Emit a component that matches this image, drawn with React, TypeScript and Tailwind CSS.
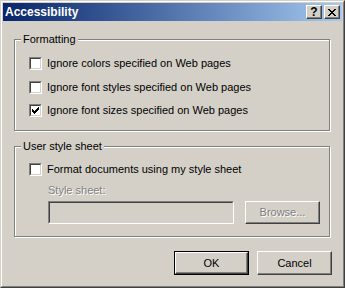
import React from 'react';

const face = 'bg-[#d4d0c8]';

const CheckMark: React.FC = () => (
  <svg width="7" height="7" viewBox="0 0 7 7" shapeRendering="crispEdges">
    {[[0, 2], [1, 3], [2, 4], [3, 3], [4, 2], [5, 1], [6, 0]].map(([x, y]) => (
      <rect key={x} x={x} y={y} width="1" height="3" fill="#000" />
    ))}
  </svg>
);

const CloseGlyph: React.FC = () => (
  <svg width="8" height="7" viewBox="0 0 8 7" shapeRendering="crispEdges">
    {[[0, 0], [6, 0], [1, 1], [5, 1], [2, 2], [4, 2], [3, 3], [2, 4], [4, 4], [1, 5], [5, 5], [0, 6], [6, 6]].map(([x, y], i) => (
      <rect key={i} x={x} y={y} width="2" height="1" fill="#000" />
    ))}
  </svg>
);

const Checkbox: React.FC<{ checked?: boolean }> = ({ checked }) => (
  <div className="w-[13px] h-[13px] shrink-0 border border-t-[#808080] border-l-[#808080] border-b-white border-r-white">
    <div className="w-full h-full border border-t-[#404040] border-l-[#404040] border-b-[#d4d0c8] border-r-[#d4d0c8] bg-white flex items-center justify-center">
      {checked && <CheckMark />}
    </div>
  </div>
);

const CheckRow: React.FC<{ label: string; checked?: boolean; className?: string }> = ({ label, checked, className }) => (
  <div className={`flex items-center h-[13px] ${className ?? ''}`}>
    <Checkbox checked={checked} />
    <span className="ml-[5px] leading-[13px] whitespace-nowrap">{label}</span>
  </div>
);

const GroupBox: React.FC<{ title: string; className?: string; children: React.ReactNode }> = ({ title, className, children }) => (
  <div className={`relative ml-[11px] w-[316px] border border-[#808080] shadow-[inset_1px_1px_0_#fff,1px_1px_0_#fff] ${className ?? ''}`}>
    <span className={`absolute left-[6px] top-[-7px] px-[2px] leading-[13px] ${face}`}>{title}</span>
    <div className="pl-[14px]">{children}</div>
  </div>
);

const PushButton: React.FC<{ label: string; disabled?: boolean; isDefault?: boolean; className?: string }> = ({ label, disabled, isDefault, className }) => (
  <div className={`w-[75px] h-[23px] ${isDefault ? 'border border-black' : ''} ${className ?? ''}`}>
    <div className="w-full h-full border border-t-white border-l-white border-r-[#404040] border-b-[#404040] shadow-[inset_-1px_-1px_0_#808080] flex items-center justify-center">
      <span className={disabled ? 'text-[#808080] [text-shadow:1px_1px_0_#fff]' : ''}>{label}</span>
    </div>
  </div>
);

const CaptionButton: React.FC<{ children: React.ReactNode }> = ({ children }) => (
  <div className="w-[16px] h-[14px] bg-[#d4d0c8] border border-t-white border-l-white border-r-[#404040] border-b-[#404040] shadow-[inset_-1px_-1px_0_#808080] flex items-center justify-center">
    {children}
  </div>
);

export default function App() {
  return (
    <div className={`w-[345px] h-[288px] ${face} border border-t-[#d4d0c8] border-l-[#d4d0c8] border-r-[#404040] border-b-[#404040] text-[11px] text-black font-['Liberation_Sans',Arial,sans-serif]`}>
      <div className="h-full border border-t-white border-l-white border-r-[#808080] border-b-[#808080] p-px flex flex-col">
        {/* Title bar */}
        <div className="h-[18px] flex items-center justify-between pl-[2px] pr-[2px] bg-gradient-to-r from-[#0a246a] to-[#a6caf0]">
          <span className="text-white font-bold text-[12px] leading-[18px]">Accessibility</span>
          <div className="flex gap-[2px]">
            <CaptionButton>
              <span className="font-bold text-[12px] leading-[12px] text-black">?</span>
            </CaptionButton>
            <CaptionButton>
              <CloseGlyph />
            </CaptionButton>
          </div>
        </div>

        {/* Formatting */}
        <GroupBox title="Formatting" className="mt-[18px] h-[92px]">
          <CheckRow className="mt-[17px]" label="Ignore colors specified on Web pages" />
          <CheckRow className="mt-[11px]" label="Ignore font styles specified on Web pages" />
          <CheckRow className="mt-[10px]" label="Ignore font sizes specified on Web pages" checked />
        </GroupBox>

        {/* User style sheet */}
        <GroupBox title="User style sheet" className="mt-[15px] h-[91px]">
          <CheckRow className="mt-[16px]" label="Format documents using my style sheet" />
          <div className="ml-[19px] mt-[8px] leading-[13px] text-[#808080] [text-shadow:1px_1px_0_#fff]">Style sheet:</div>
          <div className="ml-[19px] mt-[4px] flex items-center">
            <div className="w-[186px] h-[23px] border border-t-[#808080] border-l-[#808080] border-b-white border-r-white">
              <div className={`w-full h-full border border-t-[#404040] border-l-[#404040] border-b-[#d4d0c8] border-r-[#d4d0c8] ${face}`} />
            </div>
            <PushButton label="Browse..." disabled className="ml-[11px]" />
          </div>
        </GroupBox>

        {/* Buttons */}
        <div className="flex justify-end gap-[8px] mt-[14px] pr-[10px]">
          <PushButton label="OK" isDefault className="h-[24px]" />
          <PushButton label="Cancel" className="h-[24px]" />
        </div>
      </div>
    </div>
  );
}
